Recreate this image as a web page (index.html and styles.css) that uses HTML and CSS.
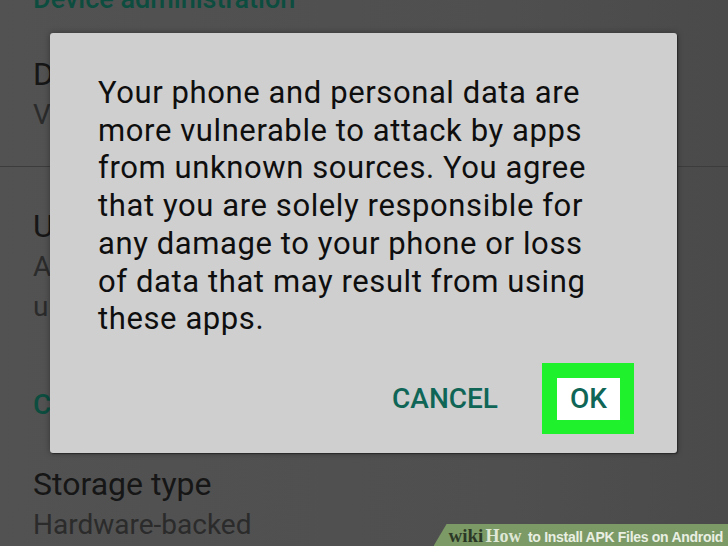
FILE: index.html
```html
<!DOCTYPE html>
<html lang="en">
<head>
  <meta charset="UTF-8">
  <title>Unknown sources warning</title>
  <link rel="stylesheet" href="styles.css">
</head>
<body>
  <div class="screen">
    <div class="settings-list">
      <div class="section-head first">Device administration</div>
      <div class="pref">
        <div class="pref-title">Device administrators</div>
        <div class="pref-sub">View or deactivate device administrators</div>
      </div>
      <div class="divider"></div>
      <div class="pref">
        <div class="pref-title">Unknown sources</div>
        <div class="pref-sub">Allow installation of apps from<br>unknown sources</div>
      </div>
      <div class="section-head">Credential storage</div>
      <div class="pref">
        <div class="pref-title">Storage type</div>
        <div class="pref-sub">Hardware-backed</div>
      </div>
    </div>

    <div class="dialog">
      <p class="dialog-text">Your phone and personal data are more vulnerable to attack by apps from unknown sources. You agree that you are solely responsible for any damage to your phone or loss of data that may result from using these apps.</p>
      <div class="dialog-actions">
        <span class="btn">CANCEL</span>
        <span class="ok-highlight"><span class="btn ok">OK</span></span>
      </div>
    </div>

    <div class="wh-banner">
      <span class="wh-wiki">wiki</span><span class="wh-how">How</span> to Install APK Files on Android
    </div>
  </div>
</body>
</html>
```

FILE: styles.css
```css
body {
  margin: 0;
  background: #4b4b4b;
  font-family: Roboto, 'Liberation Sans', sans-serif;
}
.screen {
  position: relative;
  width: 728px;
  height: 546px;
  overflow: hidden;
  background: linear-gradient(90deg, #525252 0%, #4f4f4f 70%, #4a4a4a 100%);
}
.settings-list {
  padding-left: 33px;
}
.section-head {
  color: #0c4d3f;
  font-size: 28px;
  font-weight: 500;
  line-height: 32px;
  margin-top: 31px;
  margin-bottom: 4px;
  white-space: nowrap;
}
.section-head.first {
  margin-top: -17px;
  margin-bottom: 0;
  font-size: 27px;
}
.pref {
  padding-top: 38px;
  padding-bottom: 31px;
}
.pref-title {
  color: #161616;
  font-size: 32px;
  line-height: 42px;
  white-space: nowrap;
}
.pref-sub {
  color: #2b2b2b;
  font-size: 28px;
  line-height: 40px;
  white-space: nowrap;
}
.divider {
  height: 1px;
  background: #3c3c3c;
  margin-left: -33px;
}
.dialog {
  position: absolute;
  left: 50px;
  top: 33px;
  width: 627px;
  height: 420px;
  box-sizing: border-box;
  background: #cfcfcf;
  border-radius: 3px;
  box-shadow: 1px 1px 1px #2a2a2a, 0 0 6px rgba(0, 0, 0, 0.35);
  padding: 41px 40px 0 48px;
  display: flex;
  flex-direction: column;
}
.dialog-text {
  margin: 0;
  max-width: 500px;
  color: #0e0e0e;
  font-size: 31px;
  letter-spacing: 0.6px;
  line-height: 37.7px;
}
.dialog-actions {
  display: flex;
  justify-content: flex-end;
  align-items: center;
  gap: 44px;
  margin-top: 25px;
  margin-right: 3px;
}
.btn {
  color: #0f6657;
  font-size: 28px;
  font-weight: 500;
}
.ok-highlight {
  background: #1ff22d;
  padding: 15px 14px 14px 15px;
  display: flex;
}
.btn.ok {
  background: #fff;
  width: 63px;
  height: 42px;
  display: flex;
  align-items: center;
  justify-content: center;
}
.wh-banner {
  position: absolute;
  right: 0;
  bottom: 0;
  height: 22px;
  padding: 0 5px 0 15px;
  background: #7b9a66;
  clip-path: polygon(13px 0, 100% 0, 100% 100%, 0 100%);
  color: #e9efe2;
  font-family: 'Liberation Sans', Arial, sans-serif;
  font-weight: bold;
  font-size: 14px;
  letter-spacing: -0.3px;
  line-height: 24px;
  white-space: nowrap;
}
.wh-wiki {
  font-family: 'Liberation Serif', serif;
  color: #2c3826;
  font-size: 19px;
  letter-spacing: 0;
}
.wh-how {
  font-family: 'Liberation Serif', serif;
  color: #dfe8d6;
  font-size: 18px;
  letter-spacing: 0;
  margin-left: 2px;
  margin-right: 3px;
}
```
